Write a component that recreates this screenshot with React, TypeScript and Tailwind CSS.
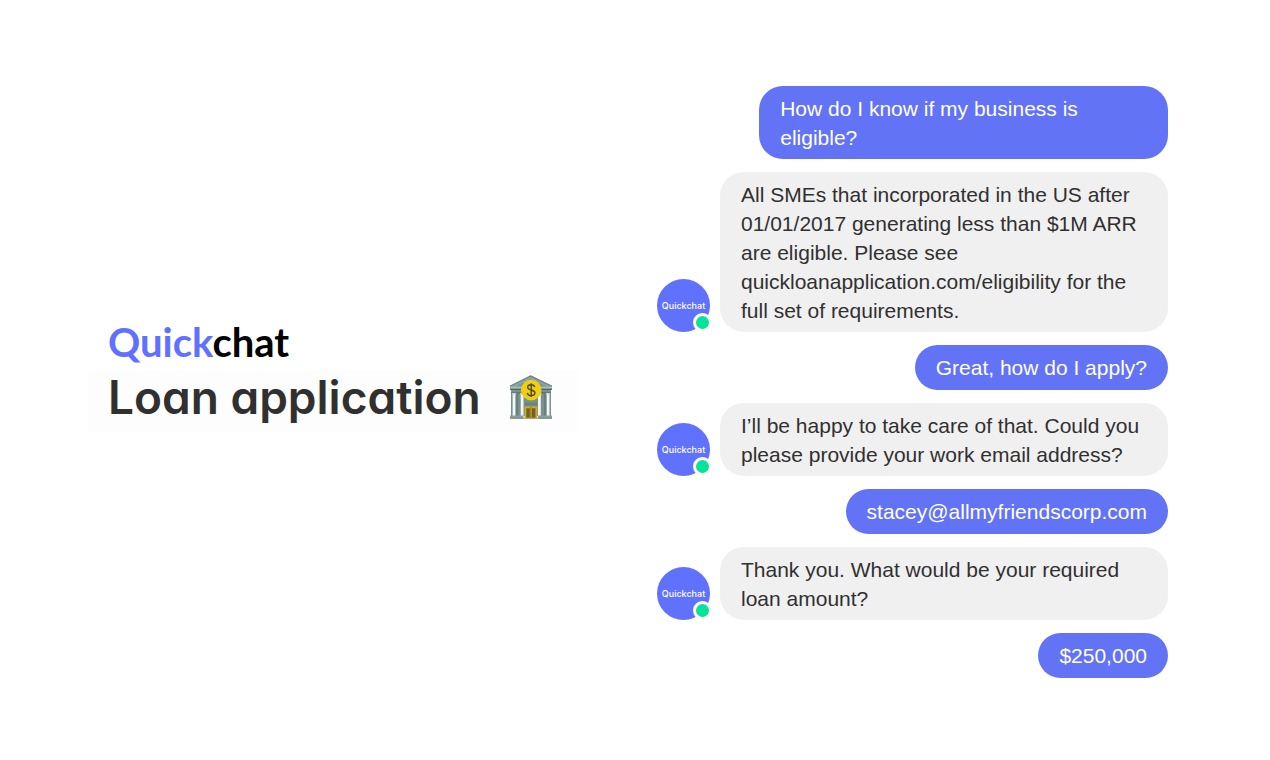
import React from 'react';

interface Message {
  from: 'user' | 'bot';
  text: string;
}

const messages: Message[] = [
  { from: 'user', text: 'How do I know if my business is eligible?' },
  {
    from: 'bot',
    text: 'All SMEs that incorporated in the US after 01/01/2017 generating less than $1M ARR are eligible. Please see quickloanapplication.com/eligibility for the full set of requirements.',
  },
  { from: 'user', text: 'Great, how do I apply?' },
  {
    from: 'bot',
    text: 'I’ll be happy to take care of that. Could you please provide your work email address?',
  },
  { from: 'user', text: 'stacey@allmyfriendscorp.com' },
  { from: 'bot', text: 'Thank you. What would be your required loan amount?' },
  { from: 'user', text: '$250,000' },
];

const BankIcon: React.FC = () => (
  <svg viewBox="0 0 44 44" className="h-11 w-11 shrink-0" aria-hidden="true">
    {/* Walls */}
    <rect x="2" y="14" width="40" height="27" fill="#77918f" />
    <path d="M8 19v22M36 19v22" stroke="#5f7775" strokeWidth="1.2" />
    {/* Roof */}
    <path d="M21.7.5 43 11v3H1v-3Z" fill="#8da5a4" />
    <path d="M1 11.2 21.7 1 43 11.2" fill="none" stroke="#6b8280" strokeWidth="1.2" />
    <path d="M7 11.2 21.7 4 37 11.2Z" fill="#7b9492" />
    <path d="M1 12.4h42" stroke="#a9bdbc" strokeWidth="1.2" />
    <path d="M1 14.4h42M2 18h40" stroke="#4d6261" strokeWidth="1" />
    {/* Columns */}
    <g fill="#f4f6f6">
      <rect x="3.6" y="19" width="2.8" height="22" />
      <rect x="11.7" y="19" width="2.8" height="22" />
      <rect x="29" y="19" width="2.8" height="22" />
      <rect x="37.7" y="19" width="2.8" height="22" />
    </g>
    <path d="M2.8 18.8h4.4M10.9 18.8h4.4M28.2 18.8h4.4M36.9 18.8h4.4" stroke="#c9d4d3" strokeWidth="1.4" />
    {/* Steps */}
    <rect x="1" y="40.5" width="13.5" height="3" fill="#8ba09f" />
    <rect x="29" y="40.5" width="14" height="3" fill="#8ba09f" />
    <path d="M1 43.2h42" stroke="#5d7170" strokeWidth=".8" />
    {/* Door */}
    <rect x="16" y="27.5" width="12" height="3" fill="#6a8380" />
    <rect x="15.6" y="31.4" width="12.6" height="12" fill="#d5a916" />
    <path d="M17.4 33.2h3.4v9.6h-3.4ZM23 33.2h3.4v9.6H23Z" fill="#6d6036" />
    <path d="M21.9 32v11.4" stroke="#7b620f" strokeWidth=".8" />
    {/* Coin */}
    <circle cx="22.2" cy="15" r="10.3" fill="#f1ce12" />
    <path
      d="M25.7 12.2c-.3-1.6-1.6-2.5-3.5-2.5-2 0-3.5 1-3.5 2.6 0 1.7 1.5 2.2 3.5 2.7s3.7 1 3.7 2.8-1.6 2.8-3.7 2.8-3.6-1-3.8-2.8M22.2 8.2v13.9"
      fill="none"
      stroke="#4e4925"
      strokeWidth="1.4"
    />
  </svg>
);

const Avatar: React.FC = () => (
  <div className="relative flex h-[53px] w-[53px] shrink-0 items-center justify-center rounded-full bg-[#6171ff]">
    <span className="font-['Inter'] text-[9px] leading-3 font-medium text-white">Quickchat</span>
    <span className="absolute -right-0.5 bottom-0 h-[19px] w-[19px] rounded-full border-[3px] border-white bg-[#06e297]"></span>
  </div>
);

const Bubble: React.FC<{ message: Message }> = ({ message }) => {
  if (message.from === 'user') {
    return (
      <li className="flex justify-end">
        <p className="min-h-[45px] max-w-4/5 rounded-3xl bg-[#6273f6] px-[21px] pt-2 pb-[7px] text-white">
          {message.text}
        </p>
      </li>
    );
  }

  return (
    <li className="flex items-end gap-[10px]">
      <Avatar />
      <p className="min-h-[45px] flex-1 rounded-3xl bg-[#f0f0f0] px-[21px] pt-2 pb-[7px] text-[#303030]">
        {message.text}
      </p>
    </li>
  );
};

export default function App() {
  return (
    <main className="flex min-h-screen items-center justify-between bg-white pr-[102px] pl-[88px]">
      <section className="flex flex-col gap-1 pb-[10px]">
        <div className="px-5 font-['Lato'] text-[40px] leading-[48px] font-bold text-black">
          <span className="text-[#6171ff]">Quick</span>chat
        </div>
        <h1 className="flex items-center gap-7 bg-[#fdfdfd] pr-6 pb-2 pl-5 font-['Inter'] text-[46px] leading-[54px] font-semibold text-[#303030] [font-feature-settings:'cv11']">
          Loan application
          <BankIcon />
        </h1>
      </section>

      <ul className="flex w-[511px] flex-col gap-[13px] pt-1 font-['Liberation_Sans'] text-[21px] leading-[29px]">
        {messages.map((message) => (
          <Bubble key={message.text} message={message} />
        ))}
      </ul>
    </main>
  );
}
